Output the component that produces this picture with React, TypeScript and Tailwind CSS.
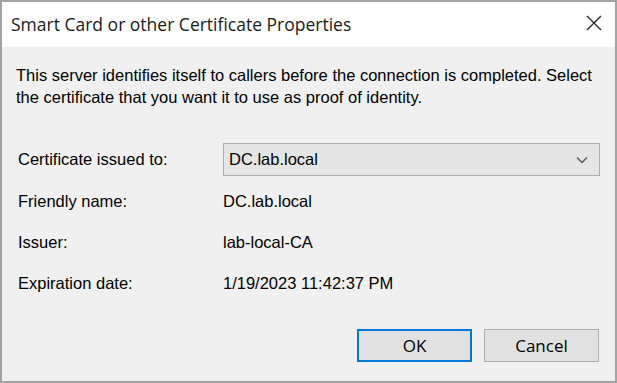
import React from "react";

const rows = [
  { label: "Friendly name:", value: "DC.lab.local" },
  { label: "Issuer:", value: "lab-local-CA" },
  { label: "Expiration date:", value: "1/19/2023 11:42:37 PM" },
];

export default function App() {
  return (
    <div className="w-[617px] h-[383px] flex flex-col bg-[#f0f0f0] border-2 border-[#a3a3a3] font-['Liberation_Sans',Arial,sans-serif] text-[16.5px] text-black overflow-hidden">
      <div className="h-[45px] shrink-0 bg-white flex items-center justify-between pl-[9px] pr-[13px]">
        <span className="text-[17.5px] font-['Open_Sans',sans-serif] text-[#1a1a1a]">
          Smart Card or other Certificate Properties
        </span>
        <svg width="16" height="16" viewBox="0 0 16 16" className="mb-[4px]">
          <path d="M1 1 L15 15 M15 1 L1 15" stroke="#222" strokeWidth="1.3" fill="none" />
        </svg>
      </div>

      <div className="flex-1 flex flex-col px-[14px]">
        <p className="mt-[17px] leading-[22px]">
          This server identifies itself to callers before the connection is completed. Select
          <br />
          the certificate that you want it to use as proof of identity.
        </p>

        <div className="mt-[35px] flex items-center h-[33px]">
          <span className="w-[207px] pl-[2px]">Certificate issued to:</span>
          <div className="flex-1 mr-[1px] h-[33px] bg-[#e5e5e5] border border-[#adadad] flex items-center justify-between pl-[5px] pr-[11px]">
            <span>DC.lab.local</span>
            <svg width="12" height="8" viewBox="0 0 12 8">
              <path d="M1 1.5 L6 6.5 L11 1.5" stroke="#555" strokeWidth="1.3" fill="none" />
            </svg>
          </div>
        </div>

        <div className="flex flex-col mt-[5px]">
          {rows.map((r) => (
            <div key={r.label} className="flex items-center h-[41px]">
              <span className="w-[207px] pl-[2px]">{r.label}</span>
              <span>{r.value}</span>
            </div>
          ))}
        </div>

        <div className="mt-auto mb-[19px] flex justify-end gap-[12px] pr-[2px]">
          <button className="w-[115px] h-[33px] bg-[#e1e1e1] border-2 border-[#0078d7] text-[17px] font-['Open_Sans',sans-serif]">
            OK
          </button>
          <button className="w-[115px] h-[33px] bg-[#e1e1e1] border border-[#adadad] text-[17px] font-['Open_Sans',sans-serif]">
            Cancel
          </button>
        </div>
      </div>
    </div>
  );
}
